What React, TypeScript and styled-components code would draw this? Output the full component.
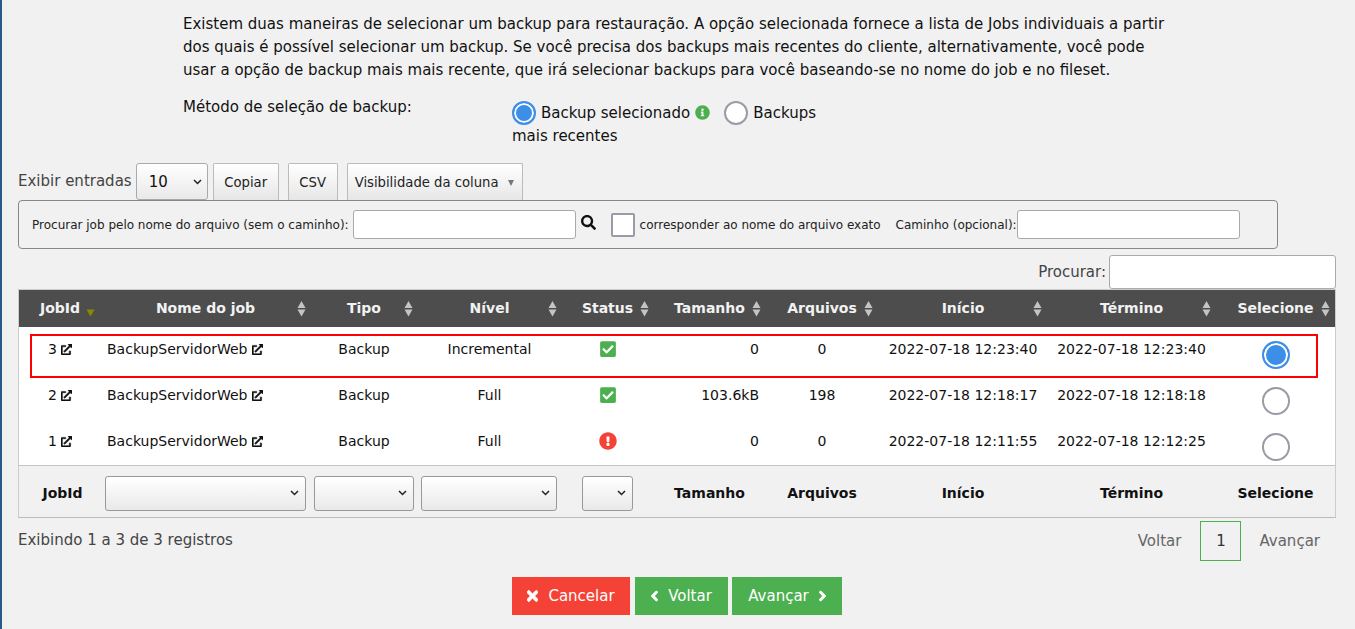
import React from "react";
import styled, { createGlobalStyle } from "styled-components";
import {
  FaCheckSquare,
  FaExclamationCircle,
  FaInfoCircle,
  FaSearch,
  FaTimes,
  FaChevronLeft,
  FaChevronRight,
  FaExternalLinkAlt,
} from "react-icons/fa";

const chevron =
  "url(\"data:image/svg+xml,%3Csvg xmlns='http://www.w3.org/2000/svg' width='9' height='6'%3E%3Cpath d='M1 1l3.5 3.5L8 1' fill='none' stroke='%23222' stroke-width='1.5'/%3E%3C/svg%3E\")";

const Global = createGlobalStyle`
  html, body { margin: 0; padding: 0; height: 100%; overflow: hidden; background: #f1f1f1; }
  body { font-family: "DejaVu Sans", sans-serif; font-size: 15px; color: #111; }
  * { box-sizing: border-box; }
`;

const Page = styled.div`
  height: 629px;
  border-left: 2px solid #2a5a85;
  padding: 13px 19px 0 16px;
  background: #f1f1f1;
`;

const Intro = styled.p`
  margin: 0 0 0 165px;
  width: 990px;
  line-height: 23px;
  font-size: 15px;
`;

const MethodRow = styled.div`
  display: flex;
  margin: 10px 0 0 165px;
  height: 71px;
`;

const MethodLabel = styled.div`
  width: 329px;
  margin-top: 7px;
  line-height: 17px;
`;

const MethodOptions = styled.div`
  width: 320px;
  line-height: 23px;
  margin-top: 9px;
`;

const Radio = styled.span<{ $on?: boolean; $size: number }>`
  display: inline-block;
  width: ${(p) => p.$size}px;
  height: ${(p) => p.$size}px;
  border-radius: 50%;
  border: 2px solid ${(p) => (p.$on ? "#3b8fe8" : "#9a9aa8")};
  background: ${(p) => (p.$on ? "#3b8fe8" : "#fff")};
  box-shadow: ${(p) => (p.$on ? "inset 0 0 0 2px #fff" : "none")};
  vertical-align: middle;
`;

const InfoMark = styled.span`
  display: inline-block;
  color: #4caf50;
  font-size: 15px;
  margin: 0 14px 0 5px;
  vertical-align: -2px;
  line-height: 15px;
  svg { display: block; }
`;

const OptionText = styled.span`
  margin-left: 5px;
`;

const Toolbar = styled.div`
  display: flex;
  align-items: flex-start;
  height: 38px;
`;

const ToolLabel = styled.span`
  color: #444;
  line-height: 36px;
  margin-right: 4px;
`;

const PageSize = styled.select`
  appearance: none;
  width: 72px;
  height: 37px;
  padding-left: 12px;
  font: 15px "DejaVu Sans", sans-serif;
  color: #111;
  border: 1px solid #aaa;
  border-radius: 3px;
  background: ${chevron} no-repeat right 5px center, linear-gradient(#fff, #e9e9e9);
  margin-right: 5px;
`;

const ToolButton = styled.button<{ $w: number; $ml?: number }>`
  width: ${(p) => p.$w}px;
  height: 38px;
  margin-left: ${(p) => p.$ml ?? 0}px;
  font: 13.2px "DejaVu Sans", sans-serif;
  color: #222;
  border: 1px solid #bbb;
  border-bottom-color: #999;
  border-radius: 2px;
  background: linear-gradient(#fff, #e6e6e6);
  padding: 0;
`;

const ColumnButton = styled(ToolButton)`
  display: flex;
  align-items: center;
  justify-content: space-between;
  padding: 0 8px 0 7px;
  border-bottom: none;
  &::after {
    content: "";
    border-left: 3px solid transparent;
    border-right: 3px solid transparent;
    border-top: 6px solid #777;
  }
`;

const FilterBox = styled.div`
  display: flex;
  align-items: center;
  position: relative;
  width: 1260px;
  height: 49px;
  margin-top: -1px;
  padding-left: 13px;
  border: 1px solid #888;
  border-radius: 4px;
  font-size: 12px;
  color: #222;
`;

const TextInput = styled.input<{ $w: number; $h: number }>`
  width: ${(p) => p.$w}px;
  height: ${(p) => p.$h}px;
  border: 1px solid #aaa;
  border-radius: 3px;
  background: #fff;
  padding: 0;
`;

const FieldLabel = styled.span`
  margin-right: 4px;
`;

const SearchIcon = styled.span`
  display: flex;
  font-size: 15px;
  color: #111;
  margin: -5px 15px 0 5px;
`;

const CheckBox = styled.span`
  width: 24px;
  height: 24px;
  border: 2px solid #9a9aa8;
  border-radius: 2px;
  background: #fff;
  margin-right: 5px;
`;

const CheckLabel = styled.span`
  margin-right: 15px;
`;

const SearchRow = styled.div`
  display: flex;
  justify-content: flex-end;
  align-items: center;
  height: 40px;
  padding-top: 6px;
  color: #444;
`;

const SearchLabel = styled.span`
  margin-right: 3px;
`;

const Frame = styled.div`
  position: relative;
`;

const Table = styled.table`
  width: 1318px;
  table-layout: fixed;
  border-collapse: separate;
  border-spacing: 0;
  border: 1px solid #ccc;
  border-bottom-color: #bbb;
  font-size: 14px;
`;

const HeadCell = styled.th`
  position: relative;
  height: 37px;
  padding: 0 0 2px;
  background: #4d4d4d;
  color: #f2f2f2;
  font-size: 14px;
  font-weight: 700;
  text-align: center;
`;

const SortMark = styled.svg<{ $right: number }>`
  position: absolute;
  top: 11px;
  right: ${(p) => p.$right}px;
  width: 9px;
  height: 16px;
`;

const Cell = styled.td<{ $align?: string }>`
  height: 46px;
  padding: 14px 6px 0;
  vertical-align: top;
  background: #fff;
  text-align: ${(p) => p.$align ?? "center"};
  line-height: 16px;
  white-space: nowrap;
`;

const LinkIcon = styled.span<{ $ml: number }>`
  display: inline-block;
  font-size: 11px;
  margin-left: ${(p) => p.$ml}px;
  vertical-align: -1px;
  svg { stroke: currentColor; stroke-width: 24px; }
`;

const StatusOk = styled.span`
  color: #4caf50;
  font-size: 18px;
  display: inline-block;
  line-height: 16px;
  svg { display: block; margin: -1px auto 0; }
`;

const StatusBad = styled(StatusOk)`
  color: #f44336;
`;

const RadioCell = styled(Cell)`
  padding-top: 14px;
`;

const FootCell = styled.td<{ $pl?: number }>`
  height: 52px;
  padding: 3px 4px 0 ${(p) => p.$pl ?? 4}px;
  border-top: 1px solid #c4c4c4;
  background: #f1f1f1;
  font-size: 14px;
  font-weight: 700;
  text-align: center;
  color: #111;
`;

const FootSelect = styled.select<{ $w?: number }>`
  appearance: none;
  width: ${(p) => (p.$w ? `${p.$w}px` : "100%")};
  height: 35px;
  display: block;
  margin: 0 auto;
  border: 1px solid #999;
  border-radius: 3px;
  background: ${chevron} no-repeat right 6px center, linear-gradient(#fff, #e9e9e9);
`;

const RowMark = styled.div`
  position: absolute;
  left: 12px;
  top: 45px;
  width: 1288px;
  height: 44px;
  border: 2px solid #f00;
  pointer-events: none;
`;

const Pager = styled.div`
  display: flex;
  align-items: center;
  justify-content: space-between;
  height: 44px;
  padding-top: 2px;
  color: #444;
`;

const PagerInfo = styled.span`
  margin-bottom: 2px;
`;

const PagerLinks = styled.div`
  display: flex;
  align-items: center;
`;

const PagerLink = styled.span`
  padding: 0 16px;
  color: #666;
`;

const PagerCurrent = styled.span`
  width: 41px;
  height: 40px;
  margin: 0 2px 0 3px;
  display: flex;
  align-items: center;
  justify-content: center;
  border: 1px solid #4caf50;
  color: #333;
`;

const Actions = styled.div`
  display: flex;
  justify-content: center;
  margin-top: 15px;
`;

const ActionButton = styled.button<{ $bg: string; $w: number; $ml?: number }>`
  display: flex;
  align-items: center;
  justify-content: center;
  gap: 10px;
  width: ${(p) => p.$w}px;
  height: 38px;
  margin-left: ${(p) => p.$ml ?? 0}px;
  border: none;
  padding: 0;
  background: ${(p) => p.$bg};
  color: #fff;
  font: 15px "DejaVu Sans", sans-serif;
`;

const CancelMark = styled(FaTimes)`
  font-size: 16px;
  width: 11px;
  stroke: currentColor;
  stroke-width: 30px;
`;

const PrevMark = styled(FaChevronLeft)`
  font-size: 12px;
  width: 7px;
  stroke: currentColor;
  stroke-width: 50px;
`;

const NextMark = styled(FaChevronRight)`
  font-size: 12px;
  width: 7px;
  stroke: currentColor;
  stroke-width: 50px;
`;

const widths = [82, 209, 108, 143, 93, 111, 114, 168, 169, 119];
const heads = ["JobId", "Nome do job", "Tipo", "Nível", "Status", "Tamanho", "Arquivos", "Início", "Término", "Selecione"];
const sortRight = [6, 4, 5, 4, 5, 4, 6, 5, 5, 5];
const rows = [
  { id: 3, level: "Incremental", ok: true, size: "0", files: "0", start: "2022-07-18 12:23:40", end: "2022-07-18 12:23:40", on: true },
  { id: 2, level: "Full", ok: true, size: "103.6kB", files: "198", start: "2022-07-18 12:18:17", end: "2022-07-18 12:18:18", on: false },
  { id: 1, level: "Full", ok: false, size: "0", files: "0", start: "2022-07-18 12:11:55", end: "2022-07-18 12:12:25", on: false },
];

function Sort({ active, right }: { active?: boolean; right: number }) {
  return (
    <SortMark viewBox="0 0 9 16" $right={right}>
      {active ? (
        <path d="M0.5 8.5h8l-4 7z" fill="#8a8a00" />
      ) : (
        <>
          <path d="M4.5 0L8.5 7h-8z" fill="#c4c4c4" />
          <path d="M0.5 8.5h8l-4 7z" fill="#c4c4c4" />
        </>
      )}
    </SortMark>
  );
}

export default function App() {
  return (
    <Page>
      <Global />
      <Intro>
        Existem duas maneiras de selecionar um backup para restauração. A opção selecionada fornece a lista de Jobs
        individuais a partir dos quais é possível selecionar um backup. Se você precisa dos backups mais recentes do
        cliente, alternativamente, você pode usar a opção de backup mais mais recente, que irá selecionar backups para
        você baseando-se no nome do job e no fileset.
      </Intro>
      <MethodRow>
        <MethodLabel>Método de seleção de backup:</MethodLabel>
        <MethodOptions>
          <Radio $on $size={24} />
          <OptionText>Backup selecionado</OptionText>
          <InfoMark>
            <FaInfoCircle />
          </InfoMark>
          <Radio $size={24} />
          <OptionText>Backups mais recentes</OptionText>
        </MethodOptions>
      </MethodRow>
      <Toolbar>
        <ToolLabel>Exibir entradas</ToolLabel>
        <PageSize defaultValue="10">
          <option>10</option>
          <option>25</option>
          <option>50</option>
        </PageSize>
        <ToolButton $w={66}>Copiar</ToolButton>
        <ToolButton $w={50} $ml={9}>CSV</ToolButton>
        <ColumnButton $w={176} $ml={9}>Visibilidade da coluna</ColumnButton>
      </Toolbar>
      <FilterBox>
        <FieldLabel>Procurar job pelo nome do arquivo (sem o caminho):</FieldLabel>
        <TextInput $w={223} $h={29} />
        <SearchIcon>
          <FaSearch />
        </SearchIcon>
        <CheckBox />
        <CheckLabel>corresponder ao nome do arquivo exato</CheckLabel>
        <span>Caminho (opcional):</span>
        <TextInput $w={223} $h={29} />
      </FilterBox>
      <SearchRow>
        <SearchLabel>Procurar:</SearchLabel>
        <TextInput $w={227} $h={34} />
      </SearchRow>
      <Frame>
        <Table>
          <colgroup>
            {widths.map((w, i) => (
              <col key={i} style={{ width: w }} />
            ))}
          </colgroup>
          <thead>
            <tr>
              {heads.map((h, i) => (
                <HeadCell key={h}>
                  {h}
                  <Sort active={i === 0} right={sortRight[i]} />
                </HeadCell>
              ))}
            </tr>
          </thead>
          <tbody>
            {rows.map((r) => (
              <tr key={r.id}>
                <Cell>
                  {r.id}
                  <LinkIcon $ml={4}>
                    <FaExternalLinkAlt />
                  </LinkIcon>
                </Cell>
                <Cell $align="left">
                  BackupServidorWeb
                  <LinkIcon $ml={5}>
                    <FaExternalLinkAlt />
                  </LinkIcon>
                </Cell>
                <Cell>Backup</Cell>
                <Cell>{r.level}</Cell>
                <Cell>
                  {r.ok ? (
                    <StatusOk>
                      <FaCheckSquare />
                    </StatusOk>
                  ) : (
                    <StatusBad>
                      <FaExclamationCircle />
                    </StatusBad>
                  )}
                </Cell>
                <Cell $align="right">{r.size}</Cell>
                <Cell>{r.files}</Cell>
                <Cell>{r.start}</Cell>
                <Cell>{r.end}</Cell>
                <RadioCell>
                  <Radio $on={r.on} $size={28} />
                </RadioCell>
              </tr>
            ))}
          </tbody>
          <tfoot>
            <tr>
              <FootCell $pl={9}>JobId</FootCell>
              <FootCell>
                <FootSelect />
              </FootCell>
              <FootCell>
                <FootSelect />
              </FootCell>
              <FootCell $pl={3}>
                <FootSelect />
              </FootCell>
              <FootCell>
                <FootSelect $w={51} />
              </FootCell>
              <FootCell>Tamanho</FootCell>
              <FootCell>Arquivos</FootCell>
              <FootCell>Início</FootCell>
              <FootCell>Término</FootCell>
              <FootCell>Selecione</FootCell>
            </tr>
          </tfoot>
        </Table>
        <RowMark />
      </Frame>
      <Pager>
        <PagerInfo>Exibindo 1 a 3 de 3 registros</PagerInfo>
        <PagerLinks>
          <PagerLink>Voltar</PagerLink>
          <PagerCurrent>1</PagerCurrent>
          <PagerLink>Avançar</PagerLink>
        </PagerLinks>
      </Pager>
      <Actions>
        <ActionButton $bg="#f44336" $w={118}>
          <CancelMark /> Cancelar
        </ActionButton>
        <ActionButton $bg="#4caf50" $w={93} $ml={5}>
          <PrevMark /> Voltar
        </ActionButton>
        <ActionButton $bg="#4caf50" $w={110} $ml={4}>
          Avançar <NextMark />
        </ActionButton>
      </Actions>
    </Page>
  );
}
